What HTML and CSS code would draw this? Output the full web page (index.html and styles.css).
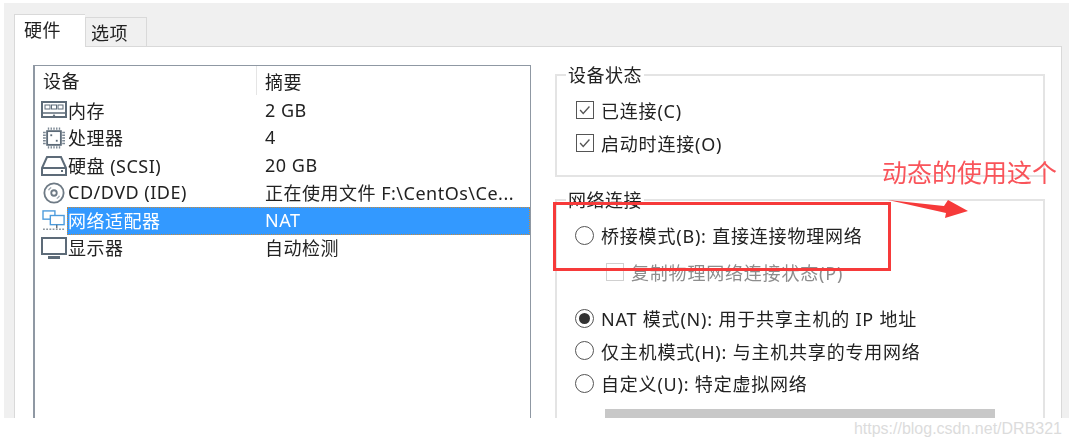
FILE: index.html
```html
<!DOCTYPE html>
<html lang="zh-CN">
<head>
<meta charset="UTF-8">
<title>虚拟机设置</title>
<link rel="stylesheet" href="styles.css">
</head>
<body>

<div class="window">
  <div class="tabs">
    <div class="tab tab-active">硬件</div>
    <div class="tab">选项</div>
  </div>

  <div class="panel">
    <!-- device list -->
    <div class="device-list">
      <div class="list-head">
        <div class="head-name">设备</div>
        <div class="head-sum">摘要</div>
      </div>
      <div class="device-row">
        <svg class="icon" viewBox="0 0 26 22"><rect x="1" y="2" width="24" height="15" fill="#fff" stroke="#5d6b78" stroke-width="2"/><rect x="4" y="5" width="5" height="4" fill="#fff" stroke="#5d6b78"/><rect x="10.500" y="5" width="5" height="4" fill="#fff" stroke="#5d6b78"/><rect x="17" y="5" width="5" height="4" fill="#fff" stroke="#5d6b78"/><path d="M1 13H25" stroke="#5d6b78" stroke-width="1.500" fill="none"/><path d="M11 17l2-3 2 3z" fill="#5d6b78"/></svg>
        <div class="row-cells">
          <div class="col-name">内存</div>
          <div class="col-sum">2 GB</div>
        </div>
      </div>
      <div class="device-row">
        <svg class="icon" viewBox="0 0 26 24"><rect x="5.500" y="4.500" width="15" height="15" fill="#fff" stroke="#5d6b78" stroke-width="2"/><path d="M7 0.500v2.500M10 0.500v2.500M13 0.500v2.500M16 0.500v2.500M19 0.500v2.500M7 21v2.500M10 21v2.500M13 21v2.500M16 21v2.500M19 21v2.500M1 6h3M1 9h3M1 12h3M1 15h3M1 18h3M22 6h3M22 9h3M22 12h3M22 15h3M22 18h3" stroke="#7c8894" stroke-width="1.500"/><rect x="9" y="8" width="2" height="2" fill="#5d6b78"/><rect x="15" y="14" width="2" height="2" fill="#5d6b78"/></svg>
        <div class="row-cells">
          <div class="col-name">处理器</div>
          <div class="col-sum">4</div>
        </div>
      </div>
      <div class="device-row">
        <svg class="icon" viewBox="0 0 26 22"><path d="M6 2h14l5 11v7H1v-7z" fill="#fff" stroke="#5d6b78" stroke-width="2"/><path d="M1 13h24" stroke="#5d6b78" stroke-width="2"/><rect x="20" y="15" width="2" height="2" fill="#5d6b78"/></svg>
        <div class="row-cells">
          <div class="col-name">硬盘 (SCSI)</div>
          <div class="col-sum">20 GB</div>
        </div>
      </div>
      <div class="device-row">
        <svg class="icon" viewBox="0 0 26 24"><circle cx="13" cy="12" r="10.500" fill="#fff" stroke="#6e7a85" stroke-width="2"/><circle cx="13" cy="12" r="3" fill="#fff" stroke="#6e7a85" stroke-width="2"/><path d="M7 9a7 7 0 0 1 3-3M19 15a7 7 0 0 1-3 3" stroke="#9aa4ad" stroke-width="1.500" fill="none"/></svg>
        <div class="row-cells">
          <div class="col-name">CD/DVD (IDE)</div>
          <div class="col-sum">正在使用文件 F:\CentOs\Ce...</div>
        </div>
      </div>
      <div class="device-row row-selected">
        <svg class="icon" viewBox="0 0 26 24"><rect x="1" y="1" width="13" height="9" fill="#fff" stroke="#4c9bdc" stroke-width="1.500"/><rect x="9" y="6" width="15" height="10" fill="#fff" stroke="#4c9bdc" stroke-width="1.500"/><path d="M16 16v4" stroke="#5d6b78" stroke-width="1.500"/><path d="M1 21h24" stroke="#8a949d" stroke-width="1.500" stroke-dasharray="2 1.500"/></svg>
        <div class="row-cells">
          <div class="col-name">网络适配器</div>
          <div class="col-sum">NAT</div>
        </div>
      </div>
      <div class="device-row">
        <svg class="icon" viewBox="0 0 26 22"><rect x="1" y="1" width="24" height="16" fill="#fff" stroke="#5d6b78" stroke-width="2"/><path d="M7 20.500h12" stroke="#5d6b78" stroke-width="3"/></svg>
        <div class="row-cells">
          <div class="col-name">显示器</div>
          <div class="col-sum">自动检测</div>
        </div>
      </div>
    </div>

    <div class="settings">
      <!-- device status -->
      <fieldset class="group group-status">
        <legend>设备状态</legend>
        <div class="option">
          <span class="check"><svg viewBox="0 0 18 18"><path d="M3.500 9l3.500 4 7-8" fill="none" stroke="#555" stroke-width="1.500"/></svg></span>
          <span>已连接(C)</span>
        </div>
        <div class="option">
          <span class="check"><svg viewBox="0 0 18 18"><path d="M3.500 9l3.500 4 7-8" fill="none" stroke="#555" stroke-width="1.500"/></svg></span>
          <span>启动时连接(O)</span>
        </div>
      </fieldset>

      <!-- network connection -->
      <fieldset class="group group-net">
        <legend>网络连接</legend>
        <div class="option"><span class="radio"></span><span>桥接模式(B): 直接连接物理网络</span></div>
        <div class="option option-sub option-off"><span class="check check-off"></span><span>复制物理网络连接状态(P)</span></div>
        <div class="option option-nat"><span class="radio radio-on"></span><span>NAT 模式(N): 用于共享主机的 IP 地址</span></div>
        <div class="option"><span class="radio"></span><span>仅主机模式(H): 与主机共享的专用网络</span></div>
        <div class="option"><span class="radio"></span><span>自定义(U): 特定虚拟网络</span></div>
        <div class="vnet-select"></div>
      </fieldset>
    </div>
  </div>

  <!-- annotation drawn on top of the screenshot -->
  <div class="mark-box"></div>
  <div class="mark-text">动态的使用这个</div>
  <svg class="mark-arrow" viewBox="0 0 88 22"><path d="M4 3L60 9L64 3L84 14L61 21L62 16Z" fill="#f63a3a"/></svg>
</div>

<div class="watermark">https://blog.csdn.net/DRB321</div>

</body>
</html>
```

FILE: styles.css
```css
/* --- Basic Setup --- */
html, body {
  height: 100%;
}

body {
  margin: 0;
  background-color: #fff;
  font-family: "Noto Sans", "Noto Sans CJK SC", sans-serif;
  font-size: 18px;
  letter-spacing: 0.5px;
  color: #222;
  overflow: hidden;
}

/* --- Dialog frame --- */
.window {
  position: relative;
  margin: 3px 0 0 4px;
  height: 415px;
  padding: 11px 7px 0 10px;
  background-color: #f0f0f0;
  overflow: hidden;
  box-sizing: border-box;
  filter: blur(0.4px);
}

/* --- Tabs --- */
.tabs {
  display: flex;
  align-items: flex-end;
  height: 32px;
}

.tab {
  width: 62px;
  height: 29px;
  line-height: 30px;
  padding-left: 5px;
  box-sizing: border-box;
  border: 1px solid #d9d9d9;
  border-bottom: none;
}

.tab-active {
  width: 71px;
  height: 33px;
  padding-left: 9px;
  background-color: #fff;
  margin-bottom: -1px;
  position: relative;
  z-index: 1;
  border-right: none;
}

/* --- Tab body --- */
.panel {
  display: flex;
  height: 400px;
  padding: 18px 16px 0 18px;
  gap: 24px;
  background-color: #fff;
  border: 1px solid #d9d9d9;
  box-sizing: border-box;
}

/* --- Device list --- */
.device-list {
  width: 498px;
  height: 360px;
  flex-shrink: 0;
  border: 1px solid #8f98a3;
  border-bottom: none;
  border-left-width: 2px;
  box-sizing: border-box;
}

.list-head, .device-row, .row-cells {
  display: flex;
  align-items: center;
}

.list-head {
  height: 29px;
  margin-bottom: 2px;
}

.head-name {
  width: 222px;
  height: 100%;
  line-height: 31px;
  padding-left: 8px;
  box-sizing: border-box;
  border-right: 1px solid #e5e5e5;
}

.head-sum {
  padding-left: 8px;
}

.device-row {
  height: 27.500px;
  padding-left: 6px;
  white-space: nowrap;
}

.icon {
  width: 26px;
  height: 22px;
  flex-shrink: 0;
}

.row-cells {
  flex: 1;
  height: 100%;
  min-width: 0;
  padding-bottom: 2px;
  box-sizing: border-box;
}

.col-name {
  width: 198px;
  flex-shrink: 0;
  padding-left: 1px;
  box-sizing: border-box;
}

/* only the cells light up, the icon stays on white */
.row-selected .row-cells {
  background-color: #3399ff;
  color: #fff;
  outline: 1px dotted #c88a3c;
  outline-offset: -1px;
}

/* --- Right hand groups --- */
.settings {
  flex: 1;
  min-width: 0;
}

.group {
  margin: 0;
  padding: 9px 0 0 18px;
  border: 2px solid #e4e4e4;
  box-sizing: border-box;
}

.group legend {
  padding: 0 2px;
  line-height: 20px;
  margin-left: -9px;
}

.group-status {
  height: 112px;
}

.group-net {
  margin-top: 13px;
  height: 260px;
}

.option {
  display: flex;
  align-items: center;
  height: 32.500px;
  gap: 7px;
  letter-spacing: 0.8px;
  white-space: nowrap;
}

.option-sub {
  margin: 4.500px 0 0 30px;
}

.option-off {
  color: #8d8d8d;
}

.option-nat {
  margin-top: 13.500px;
}

.check {
  display: block;
  width: 18px;
  height: 18px;
  margin-left: 1px;
  border: 1px solid #555;
  box-sizing: border-box;
  background-color: #fff;
}

.check svg {
  display: block;
}

.check-off {
  border-color: #d0d0d0;
}

.radio {
  display: flex;
  align-items: center;
  justify-content: center;
  width: 19px;
  height: 19px;
  border: 1px solid #555;
  border-radius: 50%;
  box-sizing: border-box;
  background-color: #fff;
}

.radio-on::after {
  content: "";
  width: 11px;
  height: 11px;
  border-radius: 50%;
  background-color: #333;
}

.vnet-select {
  width: 390px;
  height: 30px;
  margin: 9px 0 0 30px;
  background-color: #c8c8c8;
}

/* --- Red annotation --- */
.mark-box {
  position: absolute;
  left: 549px;
  top: 199px;
  width: 338px;
  height: 69px;
  border: 3px solid #f63a3a;
  box-sizing: border-box;
}

.mark-text {
  position: absolute;
  left: 878px;
  top: 152px;
  font-family: "Noto Sans CJK SC", sans-serif;
  font-size: 25px;
  letter-spacing: 0;
  line-height: 32px;
  color: #f9545a;
  white-space: nowrap;
}

.mark-arrow {
  position: absolute;
  left: 880px;
  top: 194px;
  width: 88px;
  height: 22px;
}

/* --- Watermark --- */
.watermark {
  position: absolute;
  right: 7px;
  bottom: 7px;
  font-family: "Liberation Sans", sans-serif;
  font-size: 16px;
  letter-spacing: 0;
  color: #dcdcdc;
}
```
